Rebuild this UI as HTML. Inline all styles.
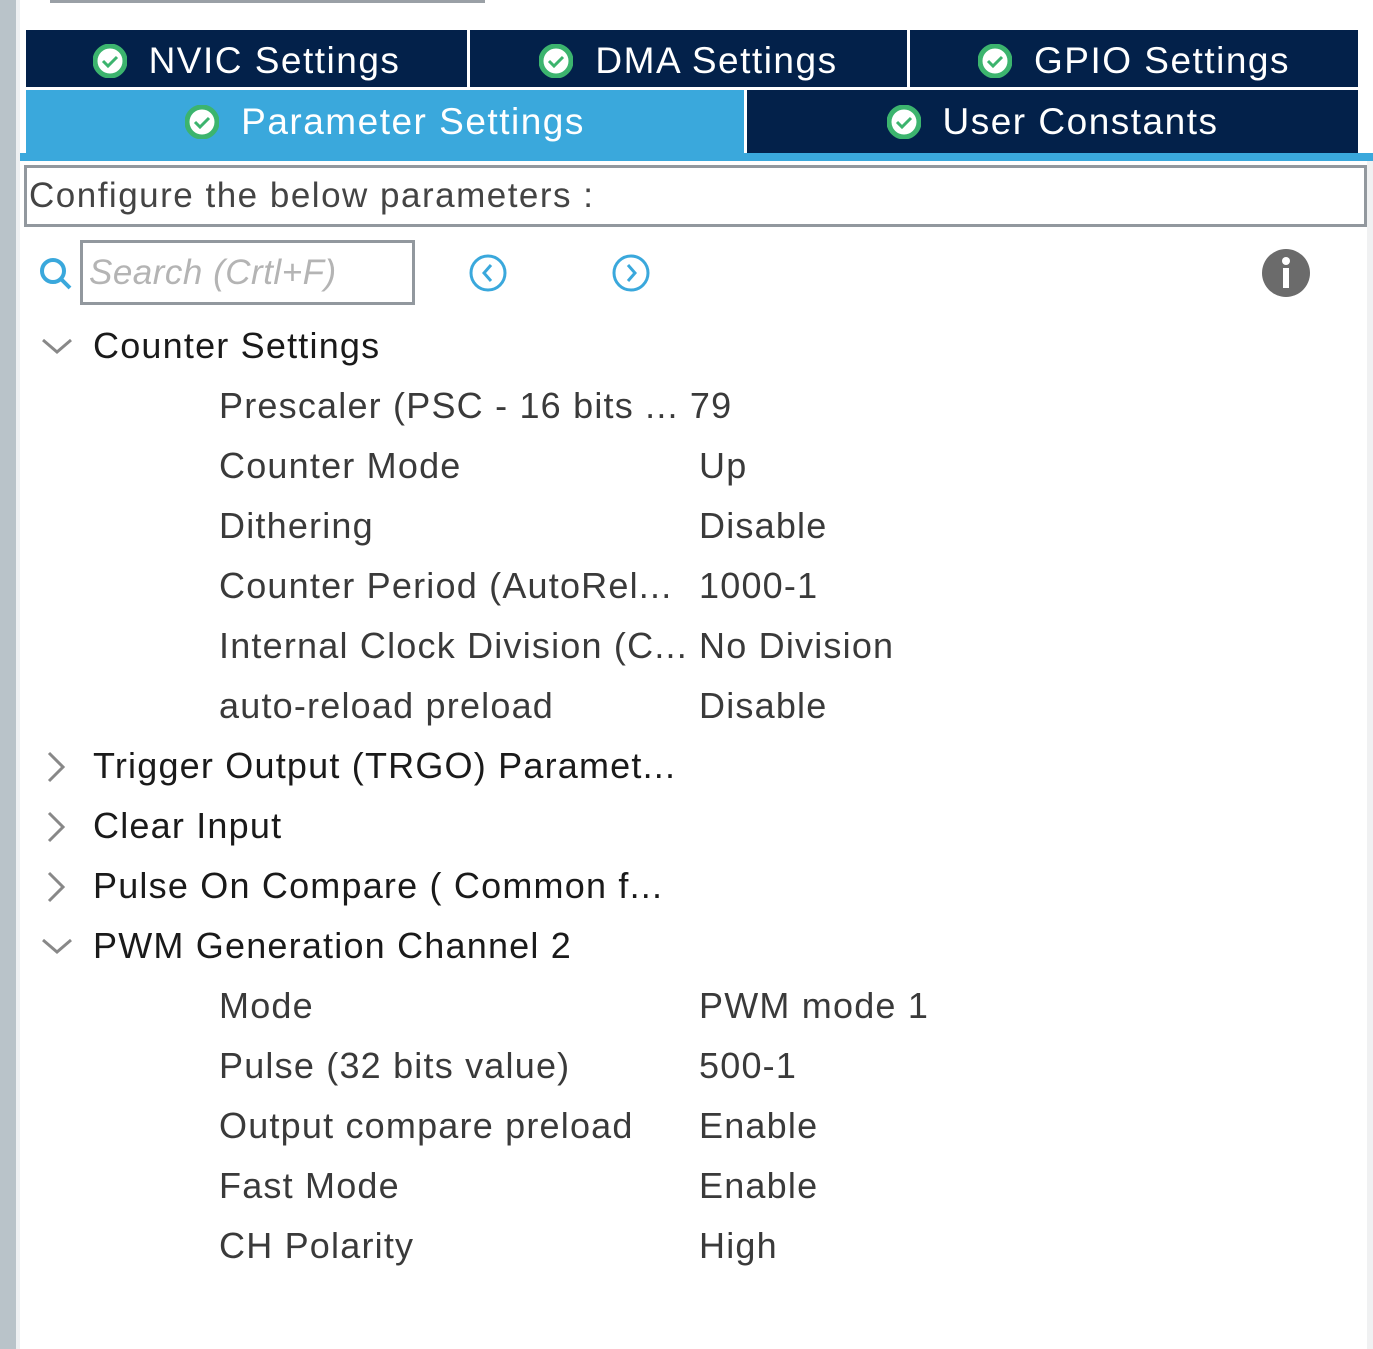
<!DOCTYPE html>
<html><head><meta charset="utf-8"><style>
*{margin:0;padding:0;box-sizing:border-box}
body{width:1373px;height:1349px;background:#fff;position:relative;overflow:hidden;font-family:"Liberation Sans",sans-serif}
.abs{position:absolute}
.tab{position:absolute;background:#03214a;color:#fff;font-size:37px;letter-spacing:1.5px;display:flex;align-items:center;justify-content:center;white-space:nowrap}
.tab svg{margin-right:22px}
.row{position:absolute;font-size:36px;letter-spacing:1.2px;line-height:60px;white-space:nowrap;color:#3a3a3a}
.h{color:#1a1a1a;left:93px}
.l{left:219px}
.v{left:699px}
.arr{position:absolute;left:40px}
</style></head><body>
<div class="abs" style="left:0;top:0;width:16px;height:1349px;background:#b9c3c9"></div>
<div class="abs" style="left:16px;top:0;width:4px;height:1349px;background:#eef0f2"></div>
<div class="abs" style="left:1367px;top:160px;width:6px;height:1189px;background:#f0f1f2"></div>
<div class="abs" style="left:50px;top:0;width:435px;height:3px;background:#9aa0a6"></div>

<div class="tab" style="left:26px;top:30px;width:441px;height:57px;padding-top:5px"><svg width="34" height="34" viewBox="0 0 34 34"><circle cx="17" cy="17" r="15" fill="#fff" stroke="#3cb46e" stroke-width="5"/><path d="M10 17l5 5 9-9" fill="none" stroke="#3cb46e" stroke-width="3"/></svg>NVIC Settings</div>
<div class="tab" style="left:470px;top:30px;width:437px;height:57px;padding-top:5px"><svg width="34" height="34" viewBox="0 0 34 34"><circle cx="17" cy="17" r="15" fill="#fff" stroke="#3cb46e" stroke-width="5"/><path d="M10 17l5 5 9-9" fill="none" stroke="#3cb46e" stroke-width="3"/></svg>DMA Settings</div>
<div class="tab" style="left:910px;top:30px;width:448px;height:57px;padding-top:5px"><svg width="34" height="34" viewBox="0 0 34 34"><circle cx="17" cy="17" r="15" fill="#fff" stroke="#3cb46e" stroke-width="5"/><path d="M10 17l5 5 9-9" fill="none" stroke="#3cb46e" stroke-width="3"/></svg>GPIO Settings</div>
<div class="tab" style="left:26px;top:90px;width:718px;height:64px;background:#3aa8dc"><svg width="34" height="34" viewBox="0 0 34 34"><circle cx="17" cy="17" r="15" fill="#fff" stroke="#3cb46e" stroke-width="5"/><path d="M10 17l5 5 9-9" fill="none" stroke="#3cb46e" stroke-width="3"/></svg>Parameter Settings</div>
<div class="tab" style="left:747px;top:90px;width:611px;height:64px"><svg width="34" height="34" viewBox="0 0 34 34"><circle cx="17" cy="17" r="15" fill="#fff" stroke="#3cb46e" stroke-width="5"/><path d="M10 17l5 5 9-9" fill="none" stroke="#3cb46e" stroke-width="3"/></svg>User Constants</div>
<div class="abs" style="left:20px;top:153px;width:1353px;height:8px;background:#3aa8dc"></div>

<div class="abs" style="left:24px;top:165px;width:1343px;height:62px;border:3px solid #92989e;font-size:35px;letter-spacing:1.5px;color:#444;line-height:56px;padding-left:2px">Configure the below parameters :</div>

<svg class="abs" style="left:38px;top:256px" width="36" height="36" viewBox="0 0 36 36"><circle cx="15" cy="15" r="11" fill="none" stroke="#3aa8dc" stroke-width="4"/><path d="M23 23l9 9" stroke="#3aa8dc" stroke-width="4"/></svg>
<div class="abs" style="left:80px;top:240px;width:335px;height:65px;border:3px solid #92989e;font-size:35px;font-style:italic;color:#b4b4b4;line-height:59px;padding-left:6px;letter-spacing:0.5px">Search (Crtl+F)</div>
<svg class="abs" style="left:467px;top:252px" width="42" height="42" viewBox="0 0 42 42"><circle cx="21" cy="21" r="17" fill="none" stroke="#3aa8dc" stroke-width="3"/><path d="M24 13l-7 8 7 8" fill="none" stroke="#3aa8dc" stroke-width="3"/></svg>
<svg class="abs" style="left:610px;top:252px" width="42" height="42" viewBox="0 0 42 42"><circle cx="21" cy="21" r="17" fill="none" stroke="#3aa8dc" stroke-width="3"/><path d="M18 13l7 8-7 8" fill="none" stroke="#3aa8dc" stroke-width="3"/></svg>
<svg class="abs" style="left:1261px;top:248px" width="50" height="50" viewBox="0 0 50 50"><circle cx="25" cy="25" r="24" fill="#6b6b6b"/><circle cx="25" cy="13" r="4" fill="#fff"/><rect x="22" y="20" width="6" height="20" fill="#fff"/></svg>

<svg class="arr" style="top:336px" width="34" height="20"><path d="M3 4l14 12 14-12" fill="none" stroke="#888" stroke-width="3"/></svg>
<div class="row h" style="top:316px">Counter Settings</div>
<div class="row l" style="top:376px">Prescaler (PSC - 16 bits ...&nbsp;79</div>
<div class="row l" style="top:436px">Counter Mode</div><div class="row v" style="top:436px">Up</div>
<div class="row l" style="top:496px">Dithering</div><div class="row v" style="top:496px">Disable</div>
<div class="row l" style="top:556px">Counter Period (AutoRel...</div><div class="row v" style="top:556px">1000-1</div>
<div class="row l" style="top:616px">Internal Clock Division (C...</div><div class="row v" style="top:616px">No Division</div>
<div class="row l" style="top:676px">auto-reload preload</div><div class="row v" style="top:676px">Disable</div>
<svg class="arr" style="top:750px;left:44px" width="24" height="34"><path d="M5 3l14 14-14 14" fill="none" stroke="#888" stroke-width="3"/></svg>
<div class="row h" style="top:736px">Trigger Output (TRGO) Paramet...</div>
<svg class="arr" style="top:810px;left:44px" width="24" height="34"><path d="M5 3l14 14-14 14" fill="none" stroke="#888" stroke-width="3"/></svg>
<div class="row h" style="top:796px">Clear Input</div>
<svg class="arr" style="top:870px;left:44px" width="24" height="34"><path d="M5 3l14 14-14 14" fill="none" stroke="#888" stroke-width="3"/></svg>
<div class="row h" style="top:856px">Pulse On Compare ( Common f...</div>
<svg class="arr" style="top:936px" width="34" height="20"><path d="M3 4l14 12 14-12" fill="none" stroke="#888" stroke-width="3"/></svg>
<div class="row h" style="top:916px">PWM Generation Channel 2</div>
<div class="row l" style="top:976px">Mode</div><div class="row v" style="top:976px">PWM mode 1</div>
<div class="row l" style="top:1036px">Pulse (32 bits value)</div><div class="row v" style="top:1036px">500-1</div>
<div class="row l" style="top:1096px">Output compare preload</div><div class="row v" style="top:1096px">Enable</div>
<div class="row l" style="top:1156px">Fast Mode</div><div class="row v" style="top:1156px">Enable</div>
<div class="row l" style="top:1216px">CH Polarity</div><div class="row v" style="top:1216px">High</div>
</body></html>
